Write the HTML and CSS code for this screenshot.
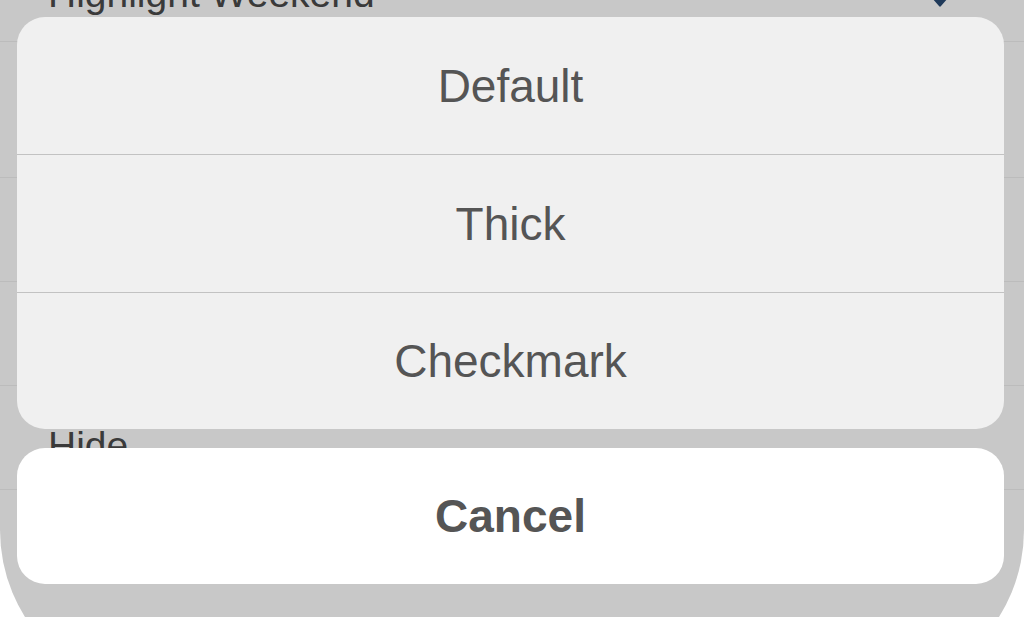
FILE: index.html
```html
<!DOCTYPE html>
<html lang="en">
<head>
   <meta charset="UTF-8">
   <title>Checkbox style</title>
   <link rel="stylesheet" href="styles.css">
</head>
<body>
   <div class="screen">
       <div class="settings">
           <div class="row first">
               <span class="label">Highlight Weekend</span>
               <svg class="pin" width="20" height="10" viewBox="0 0 20 10">
                   <path d="M2 0 L18 0 L11 8 Q10 9.5 9 8 Z" fill="#1f3a5a"/>
               </svg>
           </div>
           <div class="row tall"></div>
           <div class="row"></div>
           <div class="row"></div>
           <div class="row"><span class="label">Hide</span></div>
           <div class="row last"></div>
       </div>

       <div class="sheet">
           <div class="options">
               <button class="option">Default</button>
               <button class="option">Thick</button>
               <button class="option">Checkmark</button>
           </div>
           <button class="cancel">Cancel</button>
       </div>
   </div>
</body>
</html>
```

FILE: styles.css
```css
html, body {
    margin: 0;
    height: 100%;
    overflow: hidden;
    background: #ffffff;
}
body {
    font-family: "Liberation Sans", Arial, sans-serif;
}
.screen {
    position: relative;
    height: 694px;
    background: #c8c8c8;
    border-radius: 0 0 164px 164px;
    overflow: hidden;
}
.settings {
    margin-top: -62px;
}
.row {
    height: 103px;
    border-bottom: 1px solid #bcbcbc;
    display: flex;
    align-items: center;
    justify-content: space-between;
    padding: 0 74px 0 48px;
    color: #3a3a3a;
    font-size: 39px;
}
.row.tall {
    height: 135px;
}
.row.last {
    border-bottom: none;
}
.row .label {
    position: relative;
    top: 8px;
}
.row.first .label {
    top: 4px;
}
.pin {
    position: relative;
    top: 13px;
}
.sheet {
    position: absolute;
    top: 17px;
    left: 17px;
    right: 20px;
    display: flex;
    flex-direction: column;
    gap: 19px;
}
.options {
    background: #f0f0f0;
    border-radius: 28px;
    overflow: hidden;
    display: flex;
    flex-direction: column;
}
.option, .cancel {
    box-sizing: content-box;
    border: none;
    margin: 0;
    padding: 0;
    font-family: "Liberation Sans", Arial, sans-serif;
    font-size: 46px;
    color: #555555;
    background: transparent;
    height: 137px;
}
.option + .option {
    border-top: 1px solid #c2c2c2;
}
.option:last-child {
    height: 136px;
}
.cancel {
    background: #ffffff;
    border-radius: 28px;
    font-weight: bold;
    height: 136px;
}
```
